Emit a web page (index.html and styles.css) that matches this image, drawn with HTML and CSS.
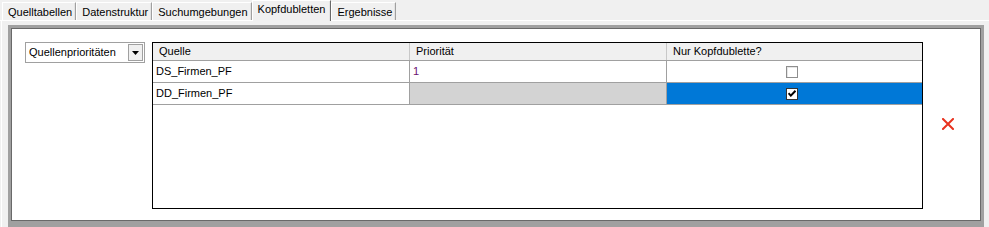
FILE: index.html
```html
<!DOCTYPE html>
<html>
<head>
<meta charset="utf-8">
<link rel="stylesheet" href="styles.css">
</head>
<body>
<div class="tabs">
  <div class="tab">Quelltabellen</div>
  <div class="tab">Datenstruktur</div>
  <div class="tab">Suchumgebungen</div>
  <div class="tab active">Kopfdubletten</div>
  <div class="tab">Ergebnisse</div>
</div>
<div class="page">
  <div class="frame">
    <div class="combo">
      <span class="combo-text">Quellenprioritäten</span>
      <span class="combo-btn"><svg width="7" height="4" viewBox="0 0 7 4"><path d="M0 0H7L3.5 4Z" fill="#000"/></svg></span>
    </div>
    <div class="grid">
      <div class="row head">
        <div class="cell c1">Quelle</div>
        <div class="cell c2">Priorität</div>
        <div class="cell c3">Nur Kopfdublette?</div>
      </div>
      <div class="row">
        <div class="cell c1">DS_Firmen_PF</div>
        <div class="cell c2 num">1</div>
        <div class="cell c3 center"><span class="check"></span></div>
      </div>
      <div class="row">
        <div class="cell c1">DD_Firmen_PF</div>
        <div class="cell c2 dis"></div>
        <div class="cell c3 center sel"><span class="check on"><svg width="8" height="7" viewBox="0 0 8 7"><path d="M0.5 3.2L2.8 5.6L7.5 0.8" fill="none" stroke="#000" stroke-width="2"/></svg></span></div>
      </div>
    </div>
    <div class="del">
      <svg width="12" height="12" viewBox="0 0 12 12"><path d="M1 1L11 11M11 1L1 11" stroke="#e8321e" stroke-width="2" stroke-linecap="square"/></svg>
    </div>
  </div>
</div>
</body>
</html>
```
FILE: styles.css
```css
html, body {
  margin: 0;
  padding: 0;
  background: #f0f0f0;
  font-family: "Liberation Sans", Arial, sans-serif;
  font-size: 11px;
  color: #000;
  overflow: hidden;
  height: 227px;
}
.tabs {
  display: flex;
  height: 20px;
  padding-left: 2px;
  border-bottom: 1px solid #fff;
  box-sizing: content-box;
}
.tab {
  margin-top: 2px;
  height: 17px;
  padding: 0 3px 0 5px;
  border-top: 1px solid #fff;
  border-left: 1px solid #fff;
  border-right: 1px solid #a0a0a0;
  box-shadow: inset -1px 0 0 #e3e3e3;
  line-height: 18px;
  white-space: nowrap;
}
.tab.active {
  margin-top: 0;
  height: 20px;
  line-height: 17px;
  margin-bottom: -1px;
  background: #f0f0f0;
  padding: 0 5px 0 5px;
  position: relative;
  z-index: 1;
  border-right: 1px solid #696969;
}
.page {
  border-left: 1px solid #fff;
  margin-left: 1px;
  padding: 4px 5px 0 6px;
  height: 206px;
}
.frame {
  height: 179px;
  border: 3px solid #a0a0a0;
  border-bottom-width: 6px;
  box-shadow: inset 0 0 0 1px #696969;
  background: #fff;
  padding: 14px 14px 0 14px;
  display: flex;
  align-items: flex-start;
}
.combo {
  width: 120px;
  height: 21px;
  box-sizing: border-box;
  border: 1px solid #a0a0a0;
  background: #fff;
  display: flex;
  align-items: center;
  justify-content: space-between;
  padding: 1px 1px 1px 3px;
}
.combo-text {
  line-height: 17px;
}
.combo-btn {
  width: 15px;
  height: 17px;
  box-sizing: border-box;
  border: 1px solid #a0a0a0;
  background: #f0f0f0;
  display: flex;
  align-items: center;
  justify-content: center;
}
.grid {
  margin-left: 7px;
  width: 771px;
  height: 167px;
  box-sizing: border-box;
  border: 1px solid #000;
  background: #fff;
}
.row {
  display: flex;
  height: 22px;
  box-sizing: border-box;
  border-bottom: 1px solid #a0a0a0;
}
.row.head {
  height: 18px;
  background: #f0f0f0;
}
.cell {
  box-sizing: border-box;
  padding-left: 3px;
  line-height: 20px;
  white-space: nowrap;
}
.head .cell {
  line-height: 17px;
  padding-left: 6px;
}
.c1 { width: 257px; border-right: 1px solid #a0a0a0; }
.c2 { width: 257px; border-right: 1px solid #a0a0a0; }
.c3 { flex: 1; }
.head .c1, .head .c2 { border-right-color: #c8c8c8; }
.num { color: #6a0f6f; }
.dis { background: #d3d3d3; }
.sel { background: #0078d7; }
.center {
  display: flex;
  align-items: center;
  justify-content: center;
  padding-left: 0;
  padding-right: 6px;
}
.check {
  width: 12px;
  height: 12px;
  box-sizing: border-box;
  border: 1px solid #8e8e8e;
  background: #fff;
  box-shadow: inset 1px 1px 0 #e6e6e6;
  display: flex;
  align-items: center;
  justify-content: center;
}
.check.on {
  border-color: #333;
  box-shadow: none;
}
.del {
  margin-left: 19px;
  margin-top: 76px;
  width: 12px;
  height: 12px;
  display: flex;
}
```
